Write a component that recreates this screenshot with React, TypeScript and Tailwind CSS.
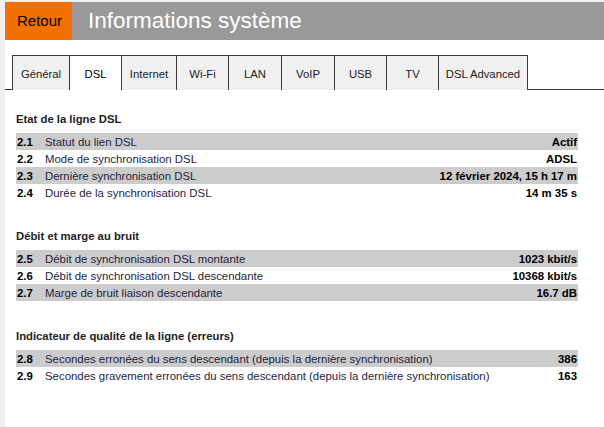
import React from "react";

type Row = { n: string; label: string; value: string };

const sections: { title: string; rows: Row[] }[] = [
  {
    title: "Etat de la ligne DSL",
    rows: [
      { n: "2.1", label: "Statut du lien DSL", value: "Actif" },
      { n: "2.2", label: "Mode de synchronisation DSL", value: "ADSL" },
      { n: "2.3", label: "Dernière synchronisation DSL", value: "12 février 2024, 15 h 17 m" },
      { n: "2.4", label: "Durée de la synchronisation DSL", value: "14 m 35 s" },
    ],
  },
  {
    title: "Débit et marge au bruit",
    rows: [
      { n: "2.5", label: "Débit de synchronisation DSL montante", value: "1023 kbit/s" },
      { n: "2.6", label: "Débit de synchronisation DSL descendante", value: "10368 kbit/s" },
      { n: "2.7", label: "Marge de bruit liaison descendante", value: "16.7 dB" },
    ],
  },
  {
    title: "Indicateur de qualité de la ligne (erreurs)",
    rows: [
      { n: "2.8", label: "Secondes erronées du sens descendant (depuis la dernière synchronisation)", value: "386" },
      { n: "2.9", label: "Secondes gravement erronées du sens descendant (depuis la dernière synchronisation)", value: "163" },
    ],
  },
];

const tabs: { label: string; w: string; active?: boolean }[] = [
  { label: "Général", w: "w-[57px]" },
  { label: "DSL", w: "w-[52px]", active: true },
  { label: "Internet", w: "w-[55px]" },
  { label: "Wi-Fi", w: "w-[52px]" },
  { label: "LAN", w: "w-[53px]" },
  { label: "VoIP", w: "w-[53px]" },
  { label: "USB", w: "w-[52px]" },
  { label: "TV", w: "w-[52px]" },
  { label: "DSL Advanced", w: "w-[90px]" },
];

export default function App() {
  return (
    <div className="w-[604px] h-[427px] overflow-hidden bg-[#f0f0f0] pt-[2px] pl-[5px] font-['Liberation_Sans',Arial,sans-serif]">
      <div className="h-full bg-white">
        <div className="flex h-[38px]">
          <div className="flex w-[67px] items-center bg-[#f27000] pl-[12px] text-[15px] text-black">Retour</div>
          <div className="flex flex-1 items-center bg-[#999999] pl-[16px] text-[22.5px] text-white">Informations système</div>
        </div>

        <div className="mt-[15px] flex h-[35px]">
          <div className="w-[7px] border-b border-[#3a3a3a]" />
          {tabs.map((t, i) => (
            <div
              key={t.label}
              className={
                t.w +
                " flex items-center justify-center border-t border-l border-[#3a3a3a] pt-[3px] text-[11.3px] text-[#222] " +
                (t.active ? "bg-white text-black" : "bg-[#f0f0f0]") +
                (i === tabs.length - 1 ? " border-r" : "")
              }
            >
              {t.label}
            </div>
          ))}
          <div className="flex-1 border-b border-[#3a3a3a]" />
        </div>

        <div className="ml-[11px] w-[562px] pt-[22px]">
          {sections.map((s, si) => (
            <div key={s.title} className={si > 0 ? "mt-[28px]" : ""}>
              <div className="mb-[7px] h-[14px] text-[11.3px] font-bold leading-[14px] text-[#222]">{s.title}</div>
              {s.rows.map((r, ri) => (
                <div
                  key={r.n}
                  className={
                    "flex h-[17px] items-center text-[11.4px] leading-[14px] " + (ri % 2 === 0 ? "bg-[#cccccc]" : "bg-white")
                  }
                >
                  <div className="w-[29px] pl-[1px] font-bold text-black">{r.n}</div>
                  <div className="flex-1 text-[#1e1e3c]">{r.label}</div>
                  <div className="pr-[1px] font-bold text-black">{r.value}</div>
                </div>
              ))}
            </div>
          ))}
        </div>
      </div>
    </div>
  );
}
